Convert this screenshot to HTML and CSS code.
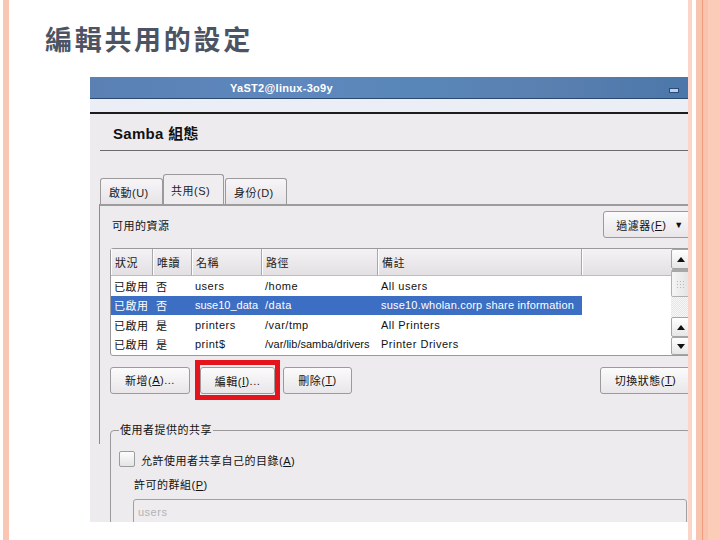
FILE: index.html
```html
<!DOCTYPE html>
<html lang="zh-Hant">
<head>
<meta charset="utf-8">
<title>編輯共用的設定</title>
<link rel="stylesheet" href="styles.css">
</head>
<body>
<div class="slide">
  <h1 class="title">編輯共用的設定</h1>
  <div class="win">
    <div class="titlebar"><span class="wtitle">YaST2@linux-3o9y</span><span class="min"></span></div>
    <div class="menubar"></div>
    <div class="head">Samba 組態</div>
    <div class="tabs">
      <div class="tab t1">啟動(U)</div>
      <div class="tab t2 active">共用(S)</div>
      <div class="tab t3">身份(D)</div>
    </div>
    <div class="pane">
      <div class="res-row">
        <span class="res-label">可用的資源</span>
        <div class="btn filter">過濾器(<u>F</u>)<span class="arrow">▼</span></div>
      </div>
      <div class="tbl">
        <div class="grid">
          <div class="hc">狀況</div><div class="hc">唯讀</div><div class="hc">名稱</div><div class="hc">路徑</div><div class="hc">備註</div><div class="hc last"></div>

          <div class="c">已啟用</div><div class="c">否</div><div class="c">users</div><div class="c">/home</div><div class="c">All users</div><div class="c"></div>

          <div class="c sel">已啟用</div><div class="c sel">否</div><div class="c sel tight">suse10_data</div><div class="c sel">/data</div><div class="c sel mid">suse10.wholan.corp share information</div><div class="c"></div>

          <div class="c">已啟用</div><div class="c">是</div><div class="c">printers</div><div class="c">/var/tmp</div><div class="c">All Printers</div><div class="c"></div>

          <div class="c">已啟用</div><div class="c">是</div><div class="c">print$</div><div class="c tight">/var/lib/samba/drivers</div><div class="c">Printer Drivers</div><div class="c"></div>
        </div>
        <div class="sb">
          <div class="sb-btn up"><span class="tri up"></span></div>
          <div class="sb-thumb"><span class="grip"></span></div>
          <div class="sb-trough"></div>
          <div class="sb-btn up2"><span class="tri up"></span></div>
          <div class="sb-btn down"><span class="tri down"></span></div>
        </div>
      </div>
      <div class="btn-row">
        <div class="btn b-add">新增(<u>A</u>)...</div>
        <div class="redbox"><div class="btn b-edit">編輯(<u>I</u>)...</div></div>
        <div class="btn b-del">刪除(<u>T</u>)</div>
        <div class="btn b-tog">切換狀態(<u>T</u>)</div>
      </div>
      <fieldset class="group">
        <legend>使用者提供的共享</legend>
        <div class="chk-row"><span class="chk"></span><span class="chk-label">允許使用者共享自己的目錄(<u>A</u>)</span></div>
        <div class="perm">許可的群組(<u>P</u>)</div>
        <div class="input">users</div>
      </fieldset>
    </div>
  </div>
</div>
</body>
</html>
```
FILE: styles.css
```css
html, body {
  margin: 0;
  padding: 0;
}
body {
  width: 720px;
  height: 540px;
  overflow: hidden;
  background: linear-gradient(to right,
    #ffffff 0 3px,
    #f8c6b3 3px 9px,
    #ffffff 9px 688px,
    #fbd6c8 688px 692px,
    #ffffff 692px 696px,
    #f9c4ae 696px 702px,
    #ee9c7c 702px 703px,
    #f9c4ae 703px 708px,
    #fbcdb9 708px 720px);
  font-family: "Liberation Sans", "Noto Sans CJK TC", sans-serif;
}
.slide {
  width: 720px;
  height: 540px;
}
.title {
  margin: 0;
  height: 77px;
  box-sizing: border-box;
  padding: 21px 0 0 45px;
  font: 700 27px/36px "Noto Sans CJK TC", sans-serif;
  letter-spacing: 2.7px;
  color: #4c5464;
}
.win {
  margin-left: 90px;
  width: 598px;
  height: 445px;
  overflow: hidden;
  background: #eeebee;
  font-size: 11px;
  letter-spacing: 0.5px;
  color: #111;
}
.titlebar {
  height: 21px;
  background: linear-gradient(90deg, #5a80b4 0%, #5e88be 35%, #5886b8 55%, #5a80b0 75%, #4c77aa 100%);
  border-bottom: 1px solid #2b4870;
  display: flex;
  align-items: center;
  padding-left: 140px;
}
.wtitle {
  color: #fff;
  font-weight: 700;
  font-size: 11px;
  letter-spacing: 0.3px;
}
.min {
  margin-left: auto;
  margin-right: 9px;
  align-self: flex-end;
  margin-bottom: 5px;
  width: 8px;
  height: 3px;
  background: #b6cff2;
  border: 1px solid #2c4a78;
}
.menubar {
  height: 13px;
  background: #eceef6;
  border-bottom: 2px solid #1c1c1c;
}
.head {
  margin-left: 10px;
  height: 36px;
  border-bottom: 1px solid #6c6c6c;
  display: flex;
  align-items: center;
  padding-left: 13px;
  font-size: 15px;
  font-weight: 700;
  letter-spacing: 0.3px;
  color: #111;
}
.tabs {
  display: flex;
  align-items: flex-end;
  height: 53px;
  margin-left: 10px;
}
.tab {
  box-sizing: border-box;
  height: 26px;
  border: 1px solid #9a9a9a;
  border-bottom: none;
  border-radius: 3px 3px 0 0;
  background: linear-gradient(#f7f5f7, #e7e4e7);
  display: flex;
  align-items: center;
  padding-left: 8px;
  color: #222;
}
.t1 { width: 63px; }
.t2 { width: 61px; height: 30px; background: #f0edf0; padding-left: 7px; }
.t3 { width: 62px; margin-left: 1px; }
.pane {
  margin-left: 9px;
  width: 596px;
  height: 240px;
  box-sizing: border-box;
  border-left: 1px solid #8c8c8c;
  border-top: 2px solid #9c9c9c;
  padding: 5px 4px 0 10px;
}
.res-row {
  display: flex;
  align-items: center;
  height: 27px;
}
.res-label {
  padding-left: 2px;
}
.btn {
  box-sizing: border-box;
  height: 27px;
  border: 1px solid #9b9b9b;
  border-radius: 3px;
  background: linear-gradient(#fcfbfc, #e8e6e8);
  display: flex;
  align-items: center;
  justify-content: center;
  color: #111;
  white-space: nowrap;
}
.filter {
  margin-left: auto;
  width: 88px;
  padding-left: 6px;
}
.arrow {
  font-size: 9px;
  margin-left: 8px;
}
.tbl {
  margin-top: 10px;
  height: 108px;
  box-sizing: border-box;
  border: 1px solid #9a9a9a;
  border-radius: 3px;
  background: #fff;
  display: flex;
}
.grid {
  flex: 1;
  display: grid;
  grid-template-columns: 42px 39px 70px 116px 204px 1fr;
  grid-template-rows: 27px repeat(4, 19.5px);
  align-content: start;
}
.hc {
  background: linear-gradient(#f4f2f4, #e3e0e3);
  border-right: 1px solid #a8a8a8;
  border-bottom: 1px solid #bdbdbd;
  box-shadow: inset 1px 0 #ffffff;
  display: flex;
  align-items: center;
  padding-left: 4px;
  color: #222;
}
.hc.last { border-right: none; }
.c {
  display: flex;
  align-items: center;
  padding-left: 3px;
  white-space: nowrap;
  overflow: hidden;
  color: #111;
}
.c.tight { letter-spacing: 0; }
.c.mid { letter-spacing: 0.2px; }
.c.sel {
  background: #3c6ec3;
  color: #fff;
}
.sb {
  width: 19px;
  display: flex;
  flex-direction: column;
}
.sb-btn {
  box-sizing: border-box;
  height: 20px;
  border: 1px solid #a5a5a5;
  border-radius: 2px;
  background: linear-gradient(#ffffff, #e6e6e6);
  display: flex;
  align-items: center;
  justify-content: center;
}
.sb-btn.down { height: 18px; }
.tri {
  width: 0;
  height: 0;
  border-left: 4px solid transparent;
  border-right: 4px solid transparent;
}
.tri.up { border-bottom: 5px solid #111; }
.tri.down { border-top: 5px solid #111; }
.sb-thumb {
  box-sizing: border-box;
  height: 28px;
  border: 1px solid #b0b0b0;
  border-top: 3px solid #a8a8a8;
  border-radius: 2px;
  background: linear-gradient(90deg, #f5f5f5, #e4e4e4);
  display: flex;
  align-items: center;
  justify-content: center;
}
.grip {
  width: 9px;
  height: 9px;
  background: radial-gradient(circle, #b8b8b8 0.8px, transparent 1px) 0 0 / 3px 3px;
}
.sb-trough {
  height: 20px;
  background: repeating-conic-gradient(#e6e6e6 0 25%, #f7f7f7 0 50%) 0 0 / 2px 2px;
}
.btn-row {
  margin-top: 4px;
  height: 40px;
  display: flex;
  align-items: center;
}
.b-add { width: 80px; }
.redbox {
  margin-left: 5px;
  border: 5px solid #e5131b;
  padding: 2px 0 1px;
}
.b-edit { width: 75px; }
.b-del { width: 69px; margin-left: 3px; }
.b-tog { width: 91px; margin-left: auto; }
.group {
  margin: 22px 0 0;
  padding: 0 0 0 8px;
  border: 1px solid #9a9a9a;
  border-radius: 4px;
  min-width: 0;
}
.group legend {
  padding: 0 1px;
  line-height: 16px;
  color: #111;
}
.chk-row {
  margin-top: 13px;
  height: 16px;
  display: flex;
  align-items: center;
}
.chk {
  box-sizing: border-box;
  width: 16px;
  height: 16px;
  border: 1px solid #9c9c9c;
  border-radius: 2px;
  background: linear-gradient(#fdfdfd, #e4e4e4);
}
.chk-label {
  margin-left: 6px;
  padding-top: 2px;
}
.perm {
  margin-top: 11px;
  line-height: 14px;
  padding-left: 15px;
}
.input {
  margin: 7px 3px 0 14px;
  height: 30px;
  box-sizing: border-box;
  border: 1px solid #a0a0a0;
  border-radius: 3px;
  background: #efecef;
  color: #b3b3b3;
  display: flex;
  align-items: flex-start;
  padding: 6px 0 0 4px;
}
```
